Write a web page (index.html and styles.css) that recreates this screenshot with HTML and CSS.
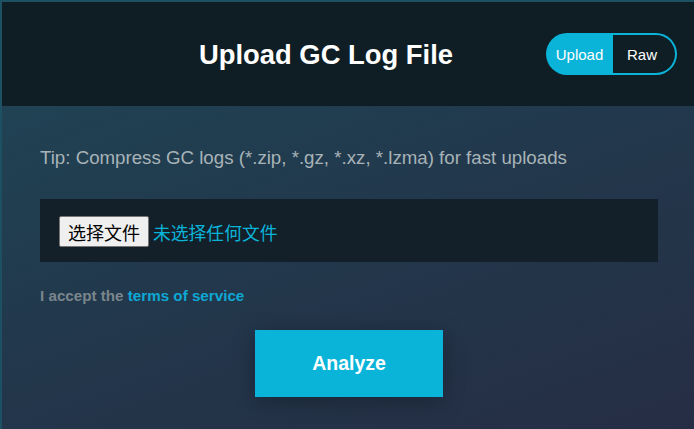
FILE: index.html
```html
<!DOCTYPE html>
<html lang="en">
<head>
<meta charset="utf-8">
<title>Upload GC Log File</title>
<link rel="stylesheet" href="styles.css">
</head>
<body>
<div class="card">
  <header class="card-header">
    <h1 class="title">Upload GC Log File</h1>
    <div class="toggle">
      <span class="seg seg-active">Upload</span>
      <span class="seg seg-idle">Raw</span>
    </div>
  </header>
  <main class="card-body">
    <p class="tip">Tip: Compress GC logs (*.zip, *.gz, *.xz, *.lzma) for fast uploads</p>
    <div class="file-box">
      <span class="file-btn">选择文件</span>
      <span class="file-name">未选择任何文件</span>
    </div>
    <p class="terms">I accept the <a class="terms-link" href="#">terms of service</a></p>
    <div class="actions">
      <button class="analyze" type="button">Analyze</button>
    </div>
  </main>
</div>
</body>
</html>
```
FILE: styles.css
```css
html, body {
  margin: 0;
  padding: 0;
  overflow: hidden;
  height: 100%;
}
body {
  background: #1e5064;
  font-family: "Liberation Sans", Arial, sans-serif;
}
.card {
  margin: 2px 0 0 2px;
  width: 694px;
  min-height: 440px;
  background: linear-gradient(160deg, #1f4757 0%, #22384c 50%, #262d44 100%);
}
.card-header {
  position: relative;
  height: 104px;
  background: #0f1e25;
  display: flex;
  align-items: center;
  justify-content: center;
  padding-right: 46px;
  box-sizing: border-box;
}
.title {
  margin: 0;
  color: #ffffff;
  font-size: 27.4px;
  font-weight: bold;
  line-height: 1;
  position: relative;
  top: 1px;
}
.toggle {
  position: absolute;
  top: 31px;
  right: 19px;
  display: flex;
  height: 42px;
}
.seg {
  display: flex;
  align-items: center;
  justify-content: center;
  font-size: 15px;
  color: #ffffff;
  box-sizing: border-box;
}
.seg-active {
  width: 67px;
  background: #0ab4d9;
  border-radius: 21px 0 0 21px;
}
.seg-idle {
  width: 64px;
  border: 2px solid #0ab4d9;
  border-left: none;
  border-radius: 0 21px 21px 0;
  background: #0f1e25;
  padding-right: 4px;
}
.card-body {
  padding: 40px 38px 0 38px;
}
.tip {
  margin: 0;
  color: #a8b3b8;
  font-size: 18.7px;
  line-height: 24px;
}
.file-box {
  margin-top: 29px;
  background: #13202a;
  height: 63px;
  display: flex;
  align-items: center;
  padding: 0 0 0 19px;
  box-sizing: border-box;
  font-family: "Noto Sans CJK SC", sans-serif;
}
.file-btn {
  width: 90px;
  height: 31px;
  box-sizing: border-box;
  background: #efefef;
  border: 1px solid #767676;
  border-radius: 2px;
  color: #000;
  font-size: 18px;
  display: flex;
  align-items: center;
  justify-content: center;
  margin-top: 2px;
}
.file-name {
  margin-left: 4px;
  color: #0ab4d9;
  font-size: 17.8px;
  margin-top: 2px;
}
.terms {
  margin: 24px 0 0 0;
  color: #7a868c;
  font-size: 15.2px;
  font-weight: bold;
  line-height: 20px;
}
.terms-link {
  color: #0ea8d4;
  text-decoration: none;
}
.actions {
  display: flex;
  justify-content: center;
  margin-top: 24px;
}
.analyze {
  width: 188px;
  height: 67px;
  background: #0ab4d9;
  border: none;
  color: #ffffff;
  font-family: "Liberation Sans", Arial, sans-serif;
  font-size: 19.5px;
  font-weight: bold;
  box-shadow: 0 4px 22px rgba(0, 0, 0, 0.28);
}
```
